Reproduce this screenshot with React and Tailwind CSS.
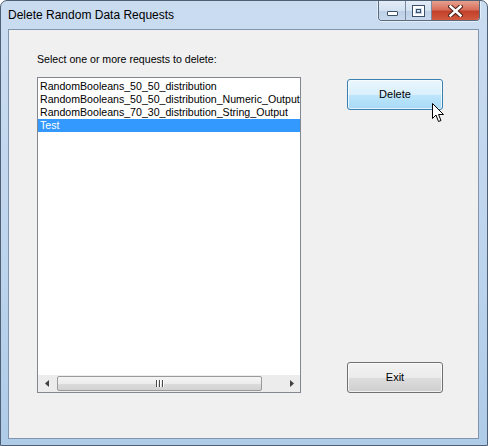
import React from "react";

function CaptionButtons() {
  return (
    <div className="flex h-[20px] rounded-b-[4px] border border-t-0 border-[#5a6b80] overflow-hidden shadow-[0_0_0_1px_rgba(255,255,255,0.5)]">
      <div className="w-[27px] h-full flex items-center justify-center bg-[linear-gradient(to_bottom,#e3ecf7_0%,#d3e1f0_50%,#bccfe5_51%,#c8d9ec_100%)] border-r border-[#7b8ca2]">
        <div className="w-[11px] h-[5px] mt-[5px] bg-white border border-[#3d4f66] rounded-[1px]" />
      </div>
      <div className="w-[26px] h-full flex items-center justify-center bg-[linear-gradient(to_bottom,#e3ecf7_0%,#d3e1f0_50%,#bccfe5_51%,#c8d9ec_100%)] border-r border-[#7b8ca2]">
        <div className="w-[11px] h-[10px] border-2 border-white outline outline-1 outline-[#3d4f66] bg-transparent flex items-center justify-center">
          <div className="w-[5px] h-[4px] border border-[#3d4f66]" />
        </div>
      </div>
      <div className="w-[47px] h-full flex items-center justify-center bg-[linear-gradient(to_bottom,#e6a08f_0%,#d8705c_45%,#c2412b_55%,#d25a3f_100%)]">
        <svg width="15" height="12" viewBox="0 0 15 12">
          <path d="M2.5 1.5 L12.5 10.5 M12.5 1.5 L2.5 10.5" stroke="#4a2018" strokeWidth="4.5" strokeLinecap="square" />
          <path d="M2.5 1.5 L12.5 10.5 M12.5 1.5 L2.5 10.5" stroke="#ffffff" strokeWidth="2.5" strokeLinecap="square" />
        </svg>
      </div>
    </div>
  );
}

function ScrollBar() {
  return (
    <div className="h-[17px] flex items-stretch bg-[#ececec] shrink-0">
      <div className="w-[17px] flex items-center justify-center">
        <svg width="4" height="7" viewBox="0 0 4 7"><path d="M4 0 L0 3.5 L4 7 Z" fill="#404040" /></svg>
      </div>
      <div className="flex-1 flex items-stretch py-[1px] pl-[2px] pr-[20px]">
        <div className="w-[205px] rounded-[2px] border border-[#9a9a9a] bg-[linear-gradient(to_bottom,#f5f5f5_0%,#ececec_50%,#dcdcdc_51%,#d2d2d2_100%)] flex items-center justify-center">
          <div className="flex gap-[1px]">
            <div className="w-[2px] h-[7px] bg-[#4a4a4a] border-r border-white" />
            <div className="w-[2px] h-[7px] bg-[#4a4a4a] border-r border-white" />
            <div className="w-[2px] h-[7px] bg-[#4a4a4a] border-r border-white" />
          </div>
        </div>
      </div>
      <div className="w-[17px] flex items-center justify-center">
        <svg width="4" height="7" viewBox="0 0 4 7"><path d="M0 0 L4 3.5 L0 7 Z" fill="#404040" /></svg>
      </div>
    </div>
  );
}

export default function App() {
  const items = [
    "RandomBooleans_50_50_distribution",
    "RandomBooleans_50_50_distribution_Numeric_Output",
    "RandomBooleans_70_30_distribution_String_Output",
  ];
  return (
    <div
      className="relative w-[488px] h-[446px] flex flex-col rounded-t-[7px] border border-[#4f5f74] bg-gradient-to-b from-[#cadcf0] via-[#c0d6ee] to-[#aecbe8] overflow-hidden"
      style={{ fontFamily: '"Liberation Sans", Arial, sans-serif' }}
    >
      <div className="h-[28px] flex items-start shrink-0 relative">
        <div className="pl-[7px] pt-[7px] text-[12px] leading-[15px] text-black">
          Delete Random Data Requests
        </div>
        <div className="ml-auto mr-[7px]">
          <CaptionButtons />
        </div>
      </div>
      <div className="flex-1 ml-[7px] mr-[8px] mb-[6px] border border-[#8196ae] bg-[#f0f0f0] flex text-[10.6px] text-black">
        <div className="flex flex-col pl-[28px] pt-[23px]">
          <div className="h-[13px] leading-[13px]">Select one or more requests to delete:</div>
          <div className="mt-[11px] w-[264px] h-[316px] border border-[#828790] bg-white flex flex-col overflow-hidden">
            <div className="flex-1 pt-[2px] overflow-hidden">
              {items.map((t) => (
                <div key={t} className="h-[13px] leading-[13px] pl-[2px] whitespace-nowrap overflow-hidden">{t}</div>
              ))}
              <div className="h-[13px] leading-[13px] pl-[2px] bg-[#3399ff] text-white">Test</div>
            </div>
            <ScrollBar />
          </div>
        </div>
        <div className="flex flex-col justify-between ml-[46px] pt-[49px] pb-[45px] text-[11px]">
          <div className="w-[96px] h-[31px] rounded-[3px] border border-[#3c7fb1] bg-[linear-gradient(to_bottom,#eaf6fd_0%,#d9f0fc_50%,#bee6fd_51%,#a7d9f5_100%)] flex items-center justify-center shadow-[inset_0_0_0_1px_rgba(255,255,255,0.7)]">
            Delete
          </div>
          <div className="w-[96px] h-[31px] rounded-[3px] border border-[#707070] bg-[linear-gradient(to_bottom,#f2f2f2_0%,#ebebeb_50%,#dddddd_51%,#cfcfcf_100%)] flex items-center justify-center shadow-[inset_0_0_0_1px_rgba(255,255,255,0.7)]">
            Exit
          </div>
        </div>
      </div>
      <svg className="absolute left-[431px] top-[102px]" width="13" height="20" viewBox="0 0 13 20">
        <path d="M0.5 0.5 L0.5 15.5 L4 12 L6.5 18.5 L9 17.5 L6.5 11.5 L11.5 11.5 Z" fill="white" stroke="black" strokeWidth="1" strokeLinejoin="miter" />
      </svg>
    </div>
  );
}
